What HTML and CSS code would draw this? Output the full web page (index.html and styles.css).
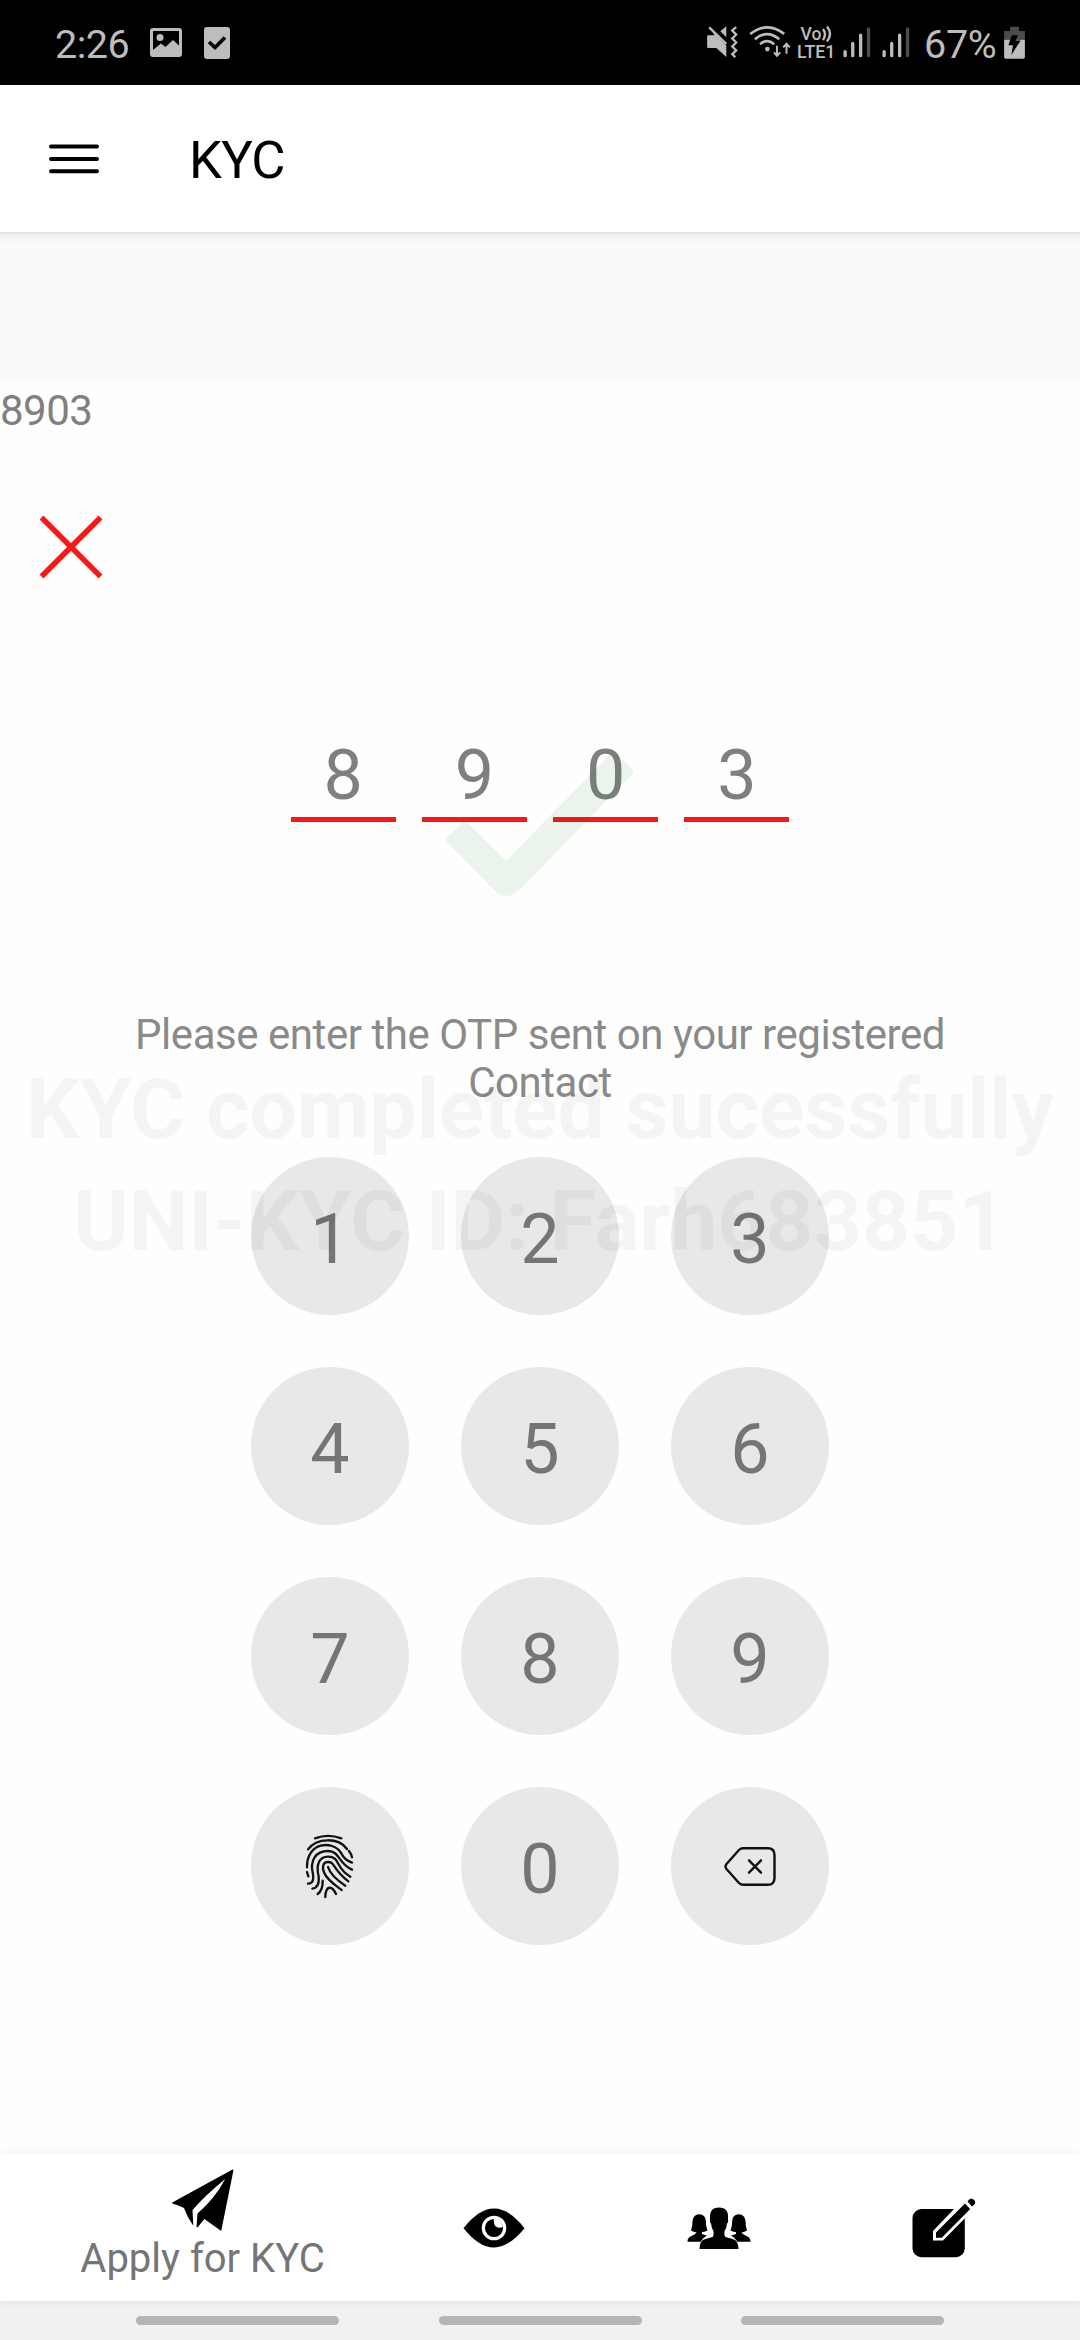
FILE: index.html
```html
<!DOCTYPE html>
<html lang="en">
<head>
<meta charset="utf-8">
<title>KYC</title>
<link rel="stylesheet" href="styles.css">
</head>
<body>
<div class="screen">
  <header class="status">
    <span class="clock">2:26</span>
    <svg class="st-photo" width="32" height="30" viewBox="0 0 32 30"><path fill="#bdbdbd" fill-rule="evenodd" d="M3 0H29Q32 0 32 3V26Q32 29 29 29H3Q0 29 0 26V3Q0 0 3 0ZM3 3V22L11 15.500L15.500 19L23 12L29 17.500V3Z"/><circle cx="10" cy="9.500" r="3.500" fill="#bdbdbd"/></svg>
    <svg class="st-check" width="26" height="32" viewBox="0 0 26 32"><rect width="26" height="32" rx="3" fill="#bdbdbd"/><path d="M5 15L11 20.500L21 10.500" fill="none" stroke="#000" stroke-width="3.600"/></svg>
    <svg class="st-mute" width="31" height="33" viewBox="77 78 93 100"><path fill="#bdbdbd" d="M80 106H99L92 94L135 137V172L105 145H80Q77 145 77 142V109Q77 106 80 106ZM135 79V112L117 94Z"/><path d="M83 82L135 132M165 81L153 92L165 104L153 116L165 128L153 140L165 152L153 163L162 173" fill="none" stroke="#bdbdbd" stroke-width="7"/></svg>
    <svg class="st-wifi" width="43" height="33" viewBox="205 78 129 100"><g fill="none" stroke="#bdbdbd" stroke-width="8"><path d="M208 102Q259 62 311 102M222 118Q259 87 296 118M238 133Q259 115 281 133"/><path d="M289 138V166M280 158L289 168L299 158M318 162V134M308 143L318 132L328 143" stroke-width="6"/></g><circle cx="260" cy="148" r="7" fill="#bdbdbd"/></svg>
    <svg class="st-lte" width="41" height="44" viewBox="-1 -8 41 44"><g fill="#bdbdbd" font-family="Roboto, sans-serif" font-weight="500"><text x="3.500" y="13.500" font-size="17.500" textLength="21">Vo</text><text x="0" y="31.500" font-size="18" textLength="38.500" lengthAdjust="spacingAndGlyphs">LTE1</text></g><path d="M26 3Q30 8 26 14M30 0.500Q36 8 30 15.500" fill="none" stroke="#bdbdbd" stroke-width="2.400"/></svg>
    <svg class="st-sig" width="28" height="33" viewBox="488 78 84 100"><path d="M494 156V168M517 131V168M541 106V168" stroke="#bdbdbd" stroke-width="10" stroke-linecap="round"/><path d="M565 87V168" stroke="#4c4c4c" stroke-width="10" stroke-linecap="round"/></svg>
    <svg class="st-sig st-sig2" width="28" height="33" viewBox="488 78 84 100"><path d="M494 156V168M517 131V168M541 106V168" stroke="#bdbdbd" stroke-width="10" stroke-linecap="round"/><path d="M565 87V168" stroke="#4c4c4c" stroke-width="10" stroke-linecap="round"/></svg>
    <span class="percent">67%</span>
    <svg class="st-bat" width="21" height="33" viewBox="972 78 63 100"><path fill="#4c4c4c" d="M990 80H1017V93H1035V120H972V93H990Z"/><path fill="#bdbdbd" d="M972 120H1035V172Q1035 177 1030 177H977Q972 177 972 172Z"/><path d="M995 106H1014L1007 122H1022L994 166L999 136H985Z"/></svg>
  </header>

  <nav class="appbar">
    <svg class="menu" width="50" height="30" viewBox="0 0 50 30"><path d="M2 2.500H48M2 15H48M2 27.300H48" stroke="#000" stroke-width="4" stroke-linecap="round"/></svg>
    <h1>KYC</h1>
  </nav>

  <main class="content">
    <div class="strip"></div>
    <div class="value">8903</div>
    <svg class="close" width="64" height="64" viewBox="0 0 64 64"><path d="M2.500 2.500L61.500 61.500M61.500 2.500L2.500 61.500" stroke="#f91717" stroke-width="5.400"/></svg>
    <div class="otp"><span>8</span><span>9</span><span>0</span><span>3</span></div>
    <p class="prompt">Please enter the OTP sent on your registered<br>Contact</p>
    <div class="keypad">
      <button>1</button><button>2</button><button>3</button>
      <button>4</button><button>5</button><button>6</button>
      <button>7</button><button>8</button><button>9</button>
      <button><svg class="finger" width="80" height="100" viewBox="0 0 240 300"><g fill="none" stroke="#111" stroke-width="7" stroke-linecap="round" stroke-linejoin="round"><path d="M75 70Q114 55 154 70M54 103C80 67 146 67 171 102M177 108Q184 117 186 127M51 157C50 80 128 76 152 112C162 130 168 136 186 143M54 206C70 206 71 191 69 178C58 135 78 108 114 108C150 108 144 146 186 164M67 221C82 219 88 206 86 185C77 148 88 125 114 125C152 125 134 158 181 185M83 237Q99 225 98 197M175 199C126 162 136 141 114 141C99 141 95 156 103 174C111 195 138 212 155 225M114 156C120 176 145 198 166 212M106 246C107 209 127 212 138 237M51 171L55 184"/></g></svg></button>
      <button>0</button>
      <button><svg class="erase" width="52" height="39" viewBox="0 0 52 39"><g fill="none" stroke="#111" stroke-width="2.400" stroke-linecap="round" stroke-linejoin="round"><path d="M18.500 1.300H44Q50.500 1.300 50.500 8V31Q50.500 37.700 44 37.700H18.500Q16.500 37.700 14.500 35.500L2.500 22Q.5 19.500 2.500 17L14.500 3.500Q16.500 1.300 18.500 1.300Z"/><path d="M25 13.300L37 25.700M37 13.300L25 25.700"/></g></svg></button>
    </div>
    <div class="done">
      <svg width="188" height="144" viewBox="446 752 188 144"><path fill="#008200" fill-opacity=".08" d="M447 837L465 820.500L506.200 860.700L611 753.500L616 753L632.500 769Q634.500 771.500 632.500 774L518 891.500Q506 900.500 495.500 891.500L447 842.500Q445 839.500 447 837Z"/></svg>
      <p class="done-title">KYC completed sucessfully</p>
      <p class="done-id">UNI-KYC ID: Farh683851</p>
    </div>
  </main>

  <nav class="tabs">
    <a class="tab tab-wide"><svg width="62" height="62" viewBox="171.500 2169 62 62"><path d="M171.800 2202.500L232 2169.500L233 2170L220.700 2231L203.900 2219L197 2227.500L196 2227L197 2213.500Q214 2199 224.800 2179Q205 2195 192 2210L192.800 2225.700Q187 2218 183.500 2208Q178 2205 171.800 2203.500Z"/></svg><span>Apply for KYC</span></a>
    <a class="tab"><svg width="62" height="40" viewBox="462.500 2207.500 62 40"><path d="M463 2227.700C473 2215 483 2208 493.500 2208S514 2215 524 2227.700C514 2240 504 2247 493.500 2247S473 2240 463 2227.700Z"/><circle cx="493.500" cy="2227.500" r="10.700" fill="none" stroke="#fff" stroke-width="3.200"/><path fill="#fff" d="M493.300 2218C493 2226 496 2228.500 502.500 2226.500Q501 2218 493.300 2218Z"/></svg></a>
    <a class="tab"><svg width="64" height="42" viewBox="686.500 2206 64 42"><path id="side" d="M687 2240.700Q686.500 2236 694 2233.500L696 2231.500Q693 2230.800 690.500 2229.500Q692 2226 692 2220Q693 2213.300 698.500 2213.300Q705 2213.300 705.300 2220Q705.300 2226 707 2229.500Q704 2231 701.500 2231L701.500 2233Q705 2234 706.500 2234.500Q702 2237 700 2240.700Z"/><use href="#side" transform="translate(1437,0) scale(-1,1)"/><path d="M699 2248Q699 2239 705 2238L712 2236Q713.500 2235 713 2230Q711 2227.500 710.500 2222.500Q709 2222 709.500 2218Q708.500 2206.500 718.500 2206.500T727.500 2218Q728 2222 726.500 2222.500Q726 2227.500 724 2230Q723.500 2235 725 2236L732 2238Q738 2239 738 2248Z"/></svg></a>
    <a class="tab"><svg width="63" height="60" viewBox="911.500 2197.500 63 60"><rect x="912" y="2208.500" width="52.300" height="48.200" rx="9"/><path d="M932.500 2240V2230.500L963.500 2198L974 2208L942.500 2240Z" fill="#fff"/><path d="M935.500 2237.300V2232L964.500 2203L969.700 2208.500L941.300 2237.300ZM967 2201Q970.500 2195.500 974 2200Q976.500 2203 971.500 2206Z"/></svg></a>
  </nav>
  <footer class="sysnav"><i></i><i></i><i></i></footer>
</div>
</body>
</html>
```
FILE: styles.css
```css
* { box-sizing: border-box; }
body { margin: 0; font-family: Roboto, sans-serif; background: #fefefe; }
svg { display: block; flex: none; }
p, h1 { margin: 0; }
.screen { width: 1080px; height: 2340px; display: flex; flex-direction: column; overflow: hidden; }

.status { height: 85px; background: #000; color: #bdbdbd; display: flex; align-items: flex-start; padding: 26px 55px 0 55px; font-size: 39.500px; line-height: 38px; flex: none; }
.clock { width: 95px; letter-spacing: -.5px; }
.st-photo { margin-top: 2px; }
.st-check { margin: 1px auto 0 22px; }
.st-wifi { margin-left: 11px; }
.st-lte { margin: -8px 0 0 4px; }
.st-sig { margin-left: 6px; }
.st-sig2 { margin-left: 11px; }
.percent { width: 71px; margin-left: 14px; white-space: nowrap; letter-spacing: -.3px; }
.st-bat { margin-left: 9px; }

.appbar { height: 147px; background: #fff; display: flex; align-items: center; padding: 0 49px; flex: none; }
.menu { margin-right: 90px; }
.appbar h1 { font-size: 52.500px; font-weight: 400; line-height: 62px; padding-top: 2px; letter-spacing: -.7px; color: #000; }

.content { position: relative; flex: 1; display: flex; flex-direction: column; }
.strip { height: 148px; background: linear-gradient(#dfdfdf, #f0f0f0 3px, #f7f7f7 9px, #fafafa 16px); }
.value { font-size: 42px; line-height: 49px; padding-top: 6px; height: 55px; letter-spacing: -.5px; color: #808080; }
.close { margin: 80px 0 0 38.500px; }
.otp { display: flex; justify-content: center; gap: 26.250px; margin-top: 151.500px; }
.otp span { width: 105px; height: 91.500px; border-bottom: 5.500px solid #f91717; font-size: 70px; line-height: 88px; text-align: center; color: #7f7f7f; }
.prompt { margin-top: 188.500px; font-size: 42px; line-height: 48px; text-align: center; color: #8a8a8a; letter-spacing: -.45px; white-space: nowrap; }
.keypad { display: grid; grid-template-columns: repeat(3, 157.500px); gap: 52.500px; justify-content: center; margin-top: 50.500px; }
.keypad button { height: 157.500px; border: 0; border-radius: 50%; padding: 7px 0 0; background: #e8e8e8; color: #757575; font: 70px/82px Roboto, sans-serif; display: flex; align-items: center; justify-content: center; }
.finger { margin-top: -9px; }
.erase { margin-top: -6px; }

/* success message fading in above the keypad */
.done { position: absolute; left: 0; top: 520px; width: 1080px; display: flex; flex-direction: column; align-items: center; font-size: 84px; font-weight: 700; line-height: 112px; color: rgba(0, 0, 0, .04); pointer-events: none; white-space: nowrap; }
.done-title { margin-top: 157.500px; letter-spacing: -.12px; }

.tabs { height: 147px; background: #fff; display: flex; padding: 0 24px; flex: none; box-shadow: 0 0 10px rgba(0, 0, 0, .07); position: relative; }
.tab { width: 225px; display: flex; flex-direction: column; align-items: center; justify-content: center; }
.tab-wide { width: 357px; justify-content: flex-start; padding-top: 15px; font-size: 40px; line-height: 46px; color: #757575; }
.tab-wide span { margin-top: 5px; }

.sysnav { height: 39px; background: #f1f1f1; display: flex; justify-content: center; gap: 99.500px; padding-top: 15px; flex: none; }
.sysnav i { width: 203px; height: 9px; border-radius: 5px; background: #b5b5b5; }
```
